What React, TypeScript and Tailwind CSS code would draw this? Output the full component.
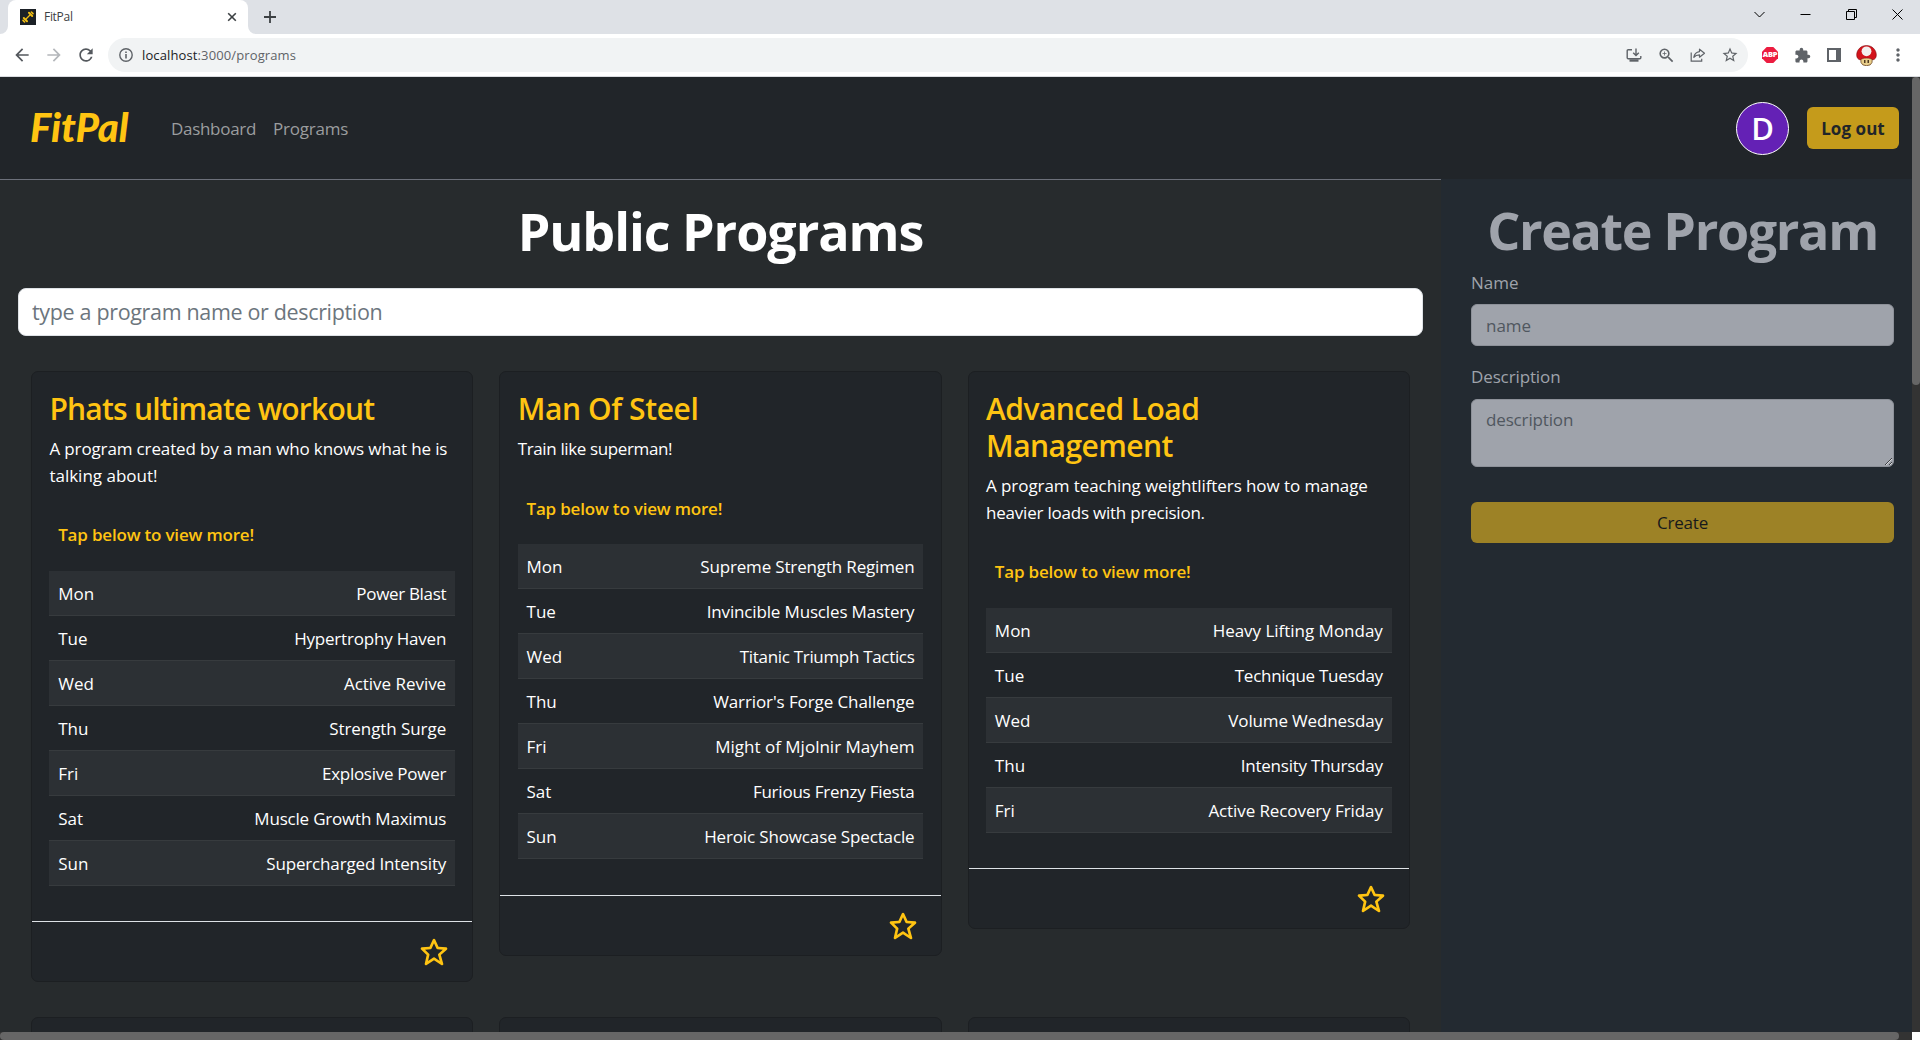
import React from 'react'
import { MdArrowBack, MdArrowForward, MdRefresh, MdZoomIn, MdStarBorder, MdExtension, MdMoreVert } from 'react-icons/md'
import { BiStar } from 'react-icons/bi'

type Day = { day: string; name: string; tracking?: string }
type Program = {
  title: string
  titleClass: string
  lines: { text: string; tracking: string }[]
  hint: string
  bottom: string
  days: Day[]
}

const programs: Program[] = [
  {
    title: 'Phats ultimate workout',
    titleClass: 'tracking-[-0.77px]',
    lines: [
      { text: 'A program created by a man who knows what he is', tracking: 'tracking-[-0.13px]' },
      { text: 'talking about!', tracking: 'tracking-[0px]' },
    ],
    hint: 'mt-8 mb-[23px]',
    bottom: 'pb-[35px]',
    days: [
      { day: 'Mon', name: 'Power Blast', tracking: 'tracking-[-0.33px]' },
      { day: 'Tue', name: 'Hypertrophy Haven', tracking: 'tracking-[-0.2px]' },
      { day: 'Wed', name: 'Active Revive', tracking: 'tracking-[-0.03px]' },
      { day: 'Thu', name: 'Strength Surge', tracking: 'tracking-[-0.07px]' },
      { day: 'Fri', name: 'Explosive Power', tracking: 'tracking-[-0.27px]' },
      { day: 'Sat', name: 'Muscle Growth Maximus', tracking: 'tracking-[-0.2px]' },
      { day: 'Sun', name: 'Supercharged Intensity', tracking: 'tracking-[-0.16px]' },
    ],
  },
  {
    title: 'Man Of Steel',
    titleClass: 'tracking-[-0.4px]',
    lines: [{ text: 'Train like superman!', tracking: 'tracking-[-0.37px]' }],
    hint: 'mt-[33px] mb-[22px]',
    bottom: 'pb-[36px]',
    days: [
      { day: 'Mon', name: 'Supreme Strength Regimen', tracking: 'tracking-[-0.16px]' },
      { day: 'Tue', name: 'Invincible Muscles Mastery', tracking: 'tracking-[-0.15px]' },
      { day: 'Wed', name: 'Titanic Triumph Tactics', tracking: 'tracking-[-0.32px]' },
      { day: 'Thu', name: "Warrior's Forge Challenge", tracking: 'tracking-[-0.1px]' },
      { day: 'Fri', name: 'Might of Mjolnir Mayhem', tracking: 'tracking-[0px]' },
      { day: 'Sat', name: 'Furious Frenzy Fiesta', tracking: 'tracking-[-0.23px]' },
      { day: 'Sun', name: 'Heroic Showcase Spectacle', tracking: 'tracking-[-0.14px]' },
    ],
  },
  {
    title: 'Advanced Load Management',
    titleClass: 'tracking-[-0.54px]',
    lines: [
      { text: 'A program teaching weightlifters how to manage', tracking: 'tracking-[-0.08px]' },
      { text: 'heavier loads with precision.', tracking: 'tracking-[-0.22px]' },
    ],
    hint: 'mt-8 mb-[23px]',
    bottom: 'pb-[35px]',
    days: [
      { day: 'Mon', name: 'Heavy Lifting Monday', tracking: 'tracking-[-0.02px]' },
      { day: 'Tue', name: 'Technique Tuesday', tracking: 'tracking-[-0.28px]' },
      { day: 'Wed', name: 'Volume Wednesday', tracking: 'tracking-[-0.15px]' },
      { day: 'Thu', name: 'Intensity Thursday', tracking: 'tracking-[-0.23px]' },
      { day: 'Fri', name: 'Active Recovery Friday', tracking: 'tracking-[-0.09px]' },
    ],
  },
]

function Favicon() {
  return (
    <svg className="size-4 shrink-0" viewBox="0 0 16 16">
      <rect width="16" height="16" fill="#1b2026" />
      <g stroke="#f0bd14" fill="none" strokeLinecap="round">
        <path d="M5.500 10.500l5-5" strokeWidth="1.300" />
        <path d="M3.800 9l3.200 3.200M9 3.800l3.200 3.200" strokeWidth="2" />
        <path d="M3 11.400l1.600 1.600M11.400 3l1.600 1.600" strokeWidth="1.600" />
      </g>
    </svg>
  )
}

function TabStrip() {
  return (
    <div className="flex h-[34px] shrink-0 bg-[#dee1e6]">
      <div className="relative ml-2 flex w-60 items-center rounded-t-lg bg-white pb-px pl-3 pr-2.5">
        <svg className="absolute -left-2 bottom-0 size-2" viewBox="0 0 8 8"><path d="M8 0v8H0a8 8 0 0 0 8-8z" fill="#fff" /></svg>
        <svg className="absolute -right-2 bottom-0 size-2" viewBox="0 0 8 8"><path d="M0 0v8h8a8 8 0 0 1-8-8z" fill="#fff" /></svg>
        <Favicon />
        <span className="ml-2 flex-1 text-[12px] tracking-[-0.3px] text-[#3c4043]">FitPal</span>
        <svg className="size-3" viewBox="0 0 12 12" stroke="#3c4043" strokeWidth="1.6"><path d="M2.2 2.2l7.6 7.6M9.8 2.2l-7.6 7.6" /></svg>
      </div>
      <div className="flex flex-1 items-center pl-4">
        <svg className="size-3" viewBox="0 0 12 12" stroke="#3c4043" strokeWidth="1.8"><path d="M6 0v12M0 6h12" /></svg>
      </div>
      <div className="flex h-7 text-black">
        {[
          'M.5 3L5.5 8l5-5',
          'M.5 5.5h10',
          'M.5 2.5h8v8h-8zM2.5 2.5V.5h8v8h-2',
          'M.5 .5l10 10M10.5 .5l-10 10',
        ].map((d, i) => (
          <div key={i} className="flex w-[46px] items-center justify-center">
            <svg className="size-[11px] overflow-visible" viewBox="0 0 11 11" fill="none" stroke="currentColor" strokeWidth="1"><path d={d} /></svg>
          </div>
        ))}
      </div>
    </div>
  )
}

function Slot({ children }: { children: React.ReactNode }) {
  return <div className="flex w-8 shrink-0 items-center justify-center">{children}</div>
}

function Mushroom() {
  return (
    <svg className="size-[21px]" viewBox="0 0 21 21">
      <path d="M4.600 12h11.800l-.4 5.500q-1 3.200-5.500 3.200t-5.500-3.200z" fill="#e9cf8b" stroke="#5a3210" strokeWidth=".7" />
      <path d="M8.800 15v3M12.200 15v3" stroke="#2b1606" strokeWidth="1.200" />
      <path d="M10.500.5c5.500 0 9.800 4.200 9.800 9.500 0 2.800-1.500 4.500-3.300 4.800-2-1.300-4.200-1.700-6.500-1.700s-4.500.4-6.500 1.700C2.200 14.500.7 12.800.7 10 .7 4.700 5 .5 10.500.5z" fill="#d3131b" stroke="#7d0a0e" strokeWidth=".6" />
      <circle cx="10.500" cy="6.300" r="4.900" fill="#f3efee" />
    </svg>
  )
}

function Toolbar() {
  return (
    <div className="flex h-[43px] shrink-0 items-center border-b border-[#dadce0] bg-white pl-1.5 pr-1.5 text-[#5f6368]">
      <Slot><MdArrowBack size={20} className="text-[#54585d]" /></Slot>
      <Slot><MdArrowForward size={20} className="text-[#b4b7bb]" /></Slot>
      <Slot><MdRefresh size={20} className="text-[#54585d]" /></Slot>
      <div className="ml-1.5 flex h-[34px] flex-1 items-center rounded-full bg-[#f1f3f4] pl-[11px] pr-0.5">
        <svg className="size-[14px]" viewBox="0 0 14 14" fill="none" stroke="#5f6368" strokeWidth="1.4">
          <circle cx="7" cy="7" r="6.2" /><path d="M7 6v4.500M7 3.400v1.500" strokeWidth="1.6" />
        </svg>
        <span className="ml-[9px] flex-1 pt-px text-[13px] tracking-[0.12px]"><span className="text-[#202124]">localhost</span>:3000/programs</span>
        <Slot>
          <svg width="16" height="15" viewBox="0 0 16 15" fill="none" stroke="currentColor" strokeWidth="1.4">
            <path d="M6 1.700H2.200q-1 0-1 1v7q0 1 1 1h11.600q1 0 1-1V8" /><path d="M10 .5v6.700M7.200 4.800L10 7.600l2.800-2.800" /><path d="M3.500 12.500h9" strokeWidth="2.400" />
          </svg>
        </Slot>
        <Slot><MdZoomIn size={19} /></Slot>
        <Slot>
          <svg width="16" height="14" viewBox="0 0 16 14" fill="none" stroke="currentColor" strokeWidth="1.2">
            <path d="M1.200 4.500v8.700h10.500v-2.500" /><path d="M9.500 1.200l5 4-5 4V6.800c-2.500 0-4.300.7-5.700 2.500.5-3 2.200-5.200 5.700-5.700z" strokeLinejoin="round" />
          </svg>
        </Slot>
        <Slot><MdStarBorder size={18} /></Slot>
      </div>
      <div className="ml-1.5 flex">
        <Slot>
          <div className="relative flex size-4 items-center justify-center">
            <svg className="absolute inset-0" viewBox="0 0 16 16"><path d="M4.700 0h6.600L16 4.700v6.600L11.300 16H4.700L0 11.300V4.700z" fill="#ec1c40" /></svg>
            <span className="relative text-[7.5px] font-extrabold leading-none tracking-[-0.3px] text-white">ABP</span>
          </div>
        </Slot>
        <Slot><MdExtension size={17} /></Slot>
        <Slot>
          <div className="size-[14px] border-2 border-r-[5px] border-[#5f6368]" />
        </Slot>
        <Slot><Mushroom /></Slot>
        <Slot><MdMoreVert size={20} /></Slot>
      </div>
    </div>
  )
}

function NavBar() {
  return (
    <nav className="flex h-[102px] shrink-0 items-center bg-[#212529] pl-[30px] pr-[13px] text-[17px]">
      <span className="w-[141px] pb-0.5 font-[Lato] text-[40px] font-black italic leading-none text-[#ffc412]">FitPal</span>
      <a className="w-[102px] pt-px tracking-[-0.3px] text-[#9b9d9f]">Dashboard</a>
      <a className="flex-1 pt-px tracking-[-0.2px] text-[#9b9d9f]">Programs</a>
      <div className="flex size-[53px] items-center justify-center rounded-full border border-white bg-[#6421b5] text-[31px] font-semibold leading-none text-white">D</div>
      <button className="ml-[18px] h-[42px] w-[92px] rounded-[6px] bg-[#c59b1b] pt-px font-bold tracking-[0.05px] text-[#212529]">Log out</button>
    </nav>
  )
}

function ProgramCard({ program }: { program: Program }) {
  return (
    <article className="rounded-[7px] border border-[#1c1f22] bg-[#212529]">
      <div className={`px-[17.4px] pt-[18px] ${program.bottom}`}>
        <h2 className={`text-[30px] font-semibold leading-[37px] text-[#ffc412] ${program.titleClass}`}>{program.title}</h2>
        <p className="mt-2 leading-[27px] text-white">
          {program.lines.map((line) => (
            <span key={line.text} className={`block whitespace-nowrap ${line.tracking}`}>{line.text}</span>
          ))}
        </p>
        <p className={`pl-[8.8px] font-semibold leading-[27px] tracking-[-0.19px] text-[#ffc412] ${program.hint}`}>Tap below to view more!</p>
        <div>
          {program.days.map((d) => (
            <div key={d.day} className="flex h-[45px] justify-between border-b border-[#373b3e] px-[8.8px] pt-[9px] leading-[27px] text-white odd:bg-[#2c3034]">
              <span>{d.day}</span>
              <span className={d.tracking}>{d.name}</span>
            </div>
          ))}
        </div>
      </div>
      <div className="flex h-[60px] justify-end border-t border-[#dee2e6] pr-[22px] pt-[14px]">
        <BiStar size={32} className="text-[#ffc412]" />
      </div>
    </article>
  )
}

function CreateProgram() {
  return (
    <aside className="flex w-[471px] shrink-0 flex-col bg-[#232a31] pl-[30px] pr-[18px] text-[#9fa3ab]">
      <h1 className="mt-[19px] whitespace-nowrap text-center text-[52px] font-bold leading-[64px] tracking-[-1.35px]">Create Program</h1>
      <label className="mt-[7px] leading-[27px]">Name</label>
      <input placeholder="name" className="mt-2 h-[42px] rounded-[6px] border border-[#8d9199] bg-[#9fa3ab] px-[14px] placeholder:text-[#50575f]" />
      <label className="mt-[17px] leading-[27px] tracking-[-0.12px]">Description</label>
      <textarea placeholder="description" className="mt-[9px] h-[68px] resize rounded-[6px] border border-[#8d9199] bg-[#9fa3ab] px-[14px] py-[6px] leading-[27px] tracking-[-0.15px] placeholder:text-[#50575f]" />
      <button className="mt-[35px] h-[41px] rounded-[6px] bg-[#9d8226] tracking-[-0.2px] text-[#17191b]">Create</button>
    </aside>
  )
}

export default function App() {
  return (
    <div className="flex h-[1040px] w-[1920px] flex-col overflow-hidden bg-white font-['Open_Sans','Noto_Sans',sans-serif] text-[17px]">
      <TabStrip />
      <Toolbar />
      <div className="flex min-h-0 flex-1">
        <div className="flex min-w-0 flex-1 flex-col">
          <NavBar />
          <div className="flex min-h-0 flex-1">
            <main className="flex-1 overflow-hidden border-t border-[#6c707a] bg-[#272b2d] pl-[18px]">
              <h1 className="mt-[19px] text-center text-[52px] font-bold leading-[64px] tracking-[-1.05px] text-white">
                <span className="mr-[18px]">Public Programs</span>
              </h1>
              <input placeholder="type a program name or description" className="mt-[25px] block h-12 w-[1405px] rounded-[8px] border border-[#dee2e6] bg-white px-[13px] pb-0.5 text-[21.5px] tracking-[-0.34px] placeholder:text-[#6c757d]" />
              <div className="ml-[13px] mt-[35px] grid w-[1379px] grid-cols-3 items-start gap-x-[26px] gap-y-[35px]">
                {programs.map((p) => <ProgramCard key={p.title} program={p} />)}
                {programs.map((p) => <div key={p.title} className="h-40 rounded-[7px] border border-[#1c1f22] bg-[#212529]" />)}
              </div>
            </main>
            <CreateProgram />
          </div>
          <div className="h-2 shrink-0 bg-[#333333]">
            <div className="h-2 w-[1899px] rounded-full bg-[#666666]" />
          </div>
        </div>
        <div className="mb-2 w-2 shrink-0 bg-[#333333]">
          <div className="h-[308px] rounded-full bg-[#666666]" />
        </div>
      </div>
    </div>
  )
}
